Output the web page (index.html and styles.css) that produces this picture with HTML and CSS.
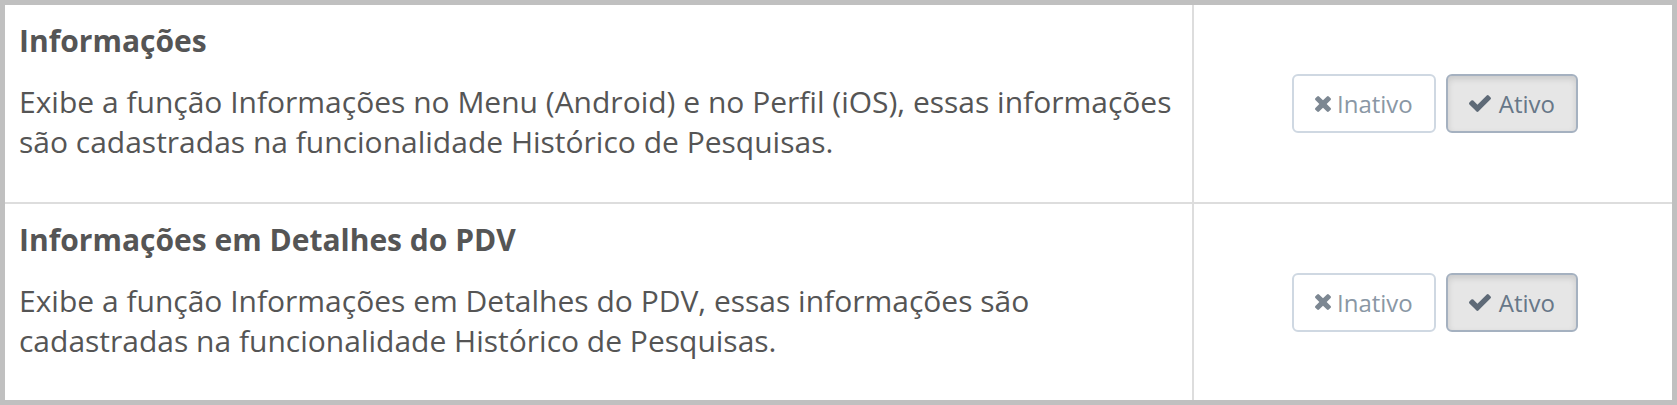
FILE: index.html
```html
<!DOCTYPE html>
<html lang="pt-BR">
<head>
<meta charset="utf-8">
<title>Configurações</title>
<link rel="stylesheet" href="styles.css">
</head>
<body>
<div class="settings">
  <div class="row">
    <div class="info">
      <h4 class="title">Informações</h4>
      <p class="desc">Exibe a função Informações no Menu (Android) e no Perfil (iOS), essas informações são cadastradas na funcionalidade Histórico de Pesquisas.</p>
    </div>
    <div class="actions">
      <div class="btn-group">
        <button class="btn btn-off" type="button"><svg class="ico ico-x" viewBox="110 366 1188 1188"><path d="M1298 1322q0 40-28 68l-136 136q-28 28-68 28t-68-28l-294-294-294 294q-28 28-68 28t-68-28l-136-136q-28-28-28-68t28-68l294-294-294-294q-28-28-28-68t28-68l136-136q28-28 68-28t68 28l294 294 294-294q28-28 68-28t68 28l136 136q28 28 28 68t-28 68l-294 294 294 294q28 28 28 68z"/></svg>Inativo</button>
        <button class="btn btn-on" type="button"><svg class="ico ico-check" viewBox="121 334 1550 1188"><path d="M1671 566q0 40-28 68l-724 724-136 136q-28 28-68 28t-68-28l-136-136-362-362q-28-28-28-68t28-68l136-136q28-28 68-28t68 28l294 295 656-657q28-28 68-28t68 28l136 136q28 28 28 68z"/></svg>Ativo</button>
      </div>
    </div>
  </div>
  <div class="row">
    <div class="info">
      <h4 class="title">Informações em Detalhes do PDV</h4>
      <p class="desc">Exibe a função Informações em Detalhes do PDV, essas informações são cadastradas na funcionalidade Histórico de Pesquisas.</p>
    </div>
    <div class="actions">
      <div class="btn-group">
        <button class="btn btn-off" type="button"><svg class="ico ico-x" viewBox="110 366 1188 1188"><path d="M1298 1322q0 40-28 68l-136 136q-28 28-68 28t-68-28l-294-294-294 294q-28 28-68 28t-68-28l-136-136q-28-28-28-68t28-68l294-294-294-294q-28-28-28-68t28-68l136-136q28-28 68-28t68 28l294 294 294-294q28-28 68-28t68 28l136 136q28 28 28 68t-28 68l-294 294 294 294q28 28 28 68z"/></svg>Inativo</button>
        <button class="btn btn-on" type="button"><svg class="ico ico-check" viewBox="121 334 1550 1188"><path d="M1671 566q0 40-28 68l-724 724-136 136q-28 28-68 28t-68-28l-136-136-362-362q-28-28-28-68t28-68l136-136q28-28 68-28t68 28l294 295 656-657q28-28 68-28t68 28l136 136q28 28 28 68z"/></svg>Ativo</button>
      </div>
    </div>
  </div>
</div>
</body>
</html>
```
FILE: styles.css
```css
* { box-sizing: border-box; }

html, body {
  margin: 0;
  background: #ffffff;
}

body {
  font-family: "Open Sans", "Noto Sans", sans-serif;
  color: #555555;
}

.settings {
  width: 1677px;
  height: 405px;
  border: 5px solid #c0c0c0;
  background: #ffffff;
}

.row {
  display: grid;
  grid-template-columns: 1189px 1fr;
  border-bottom: 2px solid #dddddd;
}

.row:last-child {
  border-bottom: 0;
}

.info {
  padding: 16px 12px 40px 14px;
  border-right: 2px solid #dddddd;
}

.row:last-child .info {
  padding-bottom: 39px;
}

.title {
  margin: 0 0 21px 0;
  font-size: 30px;
  line-height: 40px;
  font-weight: 700;
  color: #555555;
}

.desc {
  margin: 0;
  font-size: 30px;
  line-height: 40px;
  font-weight: 400;
  color: #555555;
}

.actions {
  display: flex;
  align-items: center;
  justify-content: center;
  padding-left: 4px;
}

.btn-group {
  display: flex;
  gap: 10px;
}

.btn {
  display: inline-flex;
  align-items: center;
  height: 59px;
  padding: 0 21px;
  border-radius: 6px;
  font-family: "Open Sans", "Noto Sans", sans-serif;
  font-size: 24px;
  line-height: 35px;
  cursor: pointer;
}

.ico {
  display: block;
  fill: currentColor;
}

.ico-x {
  width: 16px;
  height: 16px;
  margin-right: 6px;
}

.ico-check {
  width: 22px;
  height: 17px;
  margin-right: 8px;
}

.btn-off {
  background: #ffffff;
  border: 2px solid #cfd8e2;
  color: #8a97a5;
}

.btn-off .ico {
  color: #7c8792;
}

.btn-on {
  background: #e6e6e6;
  border: 2px solid #a5b1c0;
  color: #677788;
  box-shadow: inset 0 3px 6px rgba(0, 0, 0, 0.125);
}

.btn-on .ico {
  color: #5e6a77;
}
```
